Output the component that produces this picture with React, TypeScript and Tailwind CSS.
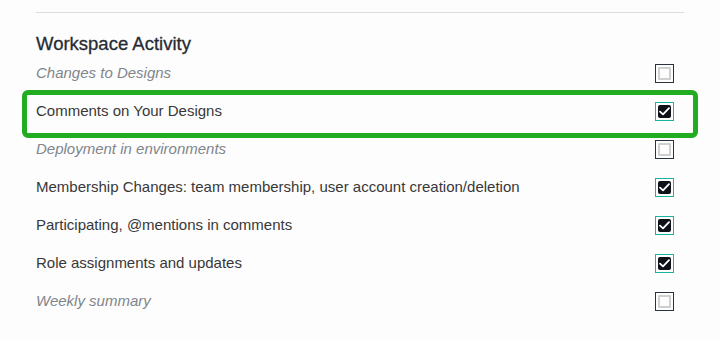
import React from 'react';

type Pref = { label: string; checked: boolean; highlight?: boolean };

const prefs: Pref[] = [
  { label: 'Changes to Designs', checked: false },
  { label: 'Comments on Your Designs', checked: true, highlight: true },
  { label: 'Deployment in environments', checked: false },
  { label: 'Membership Changes: team membership, user account creation/deletion', checked: true },
  { label: 'Participating, @mentions in comments', checked: true },
  { label: 'Role assignments and updates', checked: true },
  { label: 'Weekly summary', checked: false },
];

function Checkbox({ checked }: { checked: boolean }) {
  if (checked) {
    return (
      <div className="w-[19px] h-[19px] border border-[#19b3a3] p-[2px] shrink-0">
        <div className="w-full h-full bg-[#0e1218] rounded-[2px] flex items-center justify-center">
          <svg width="11" height="9" viewBox="0 0 11 9" fill="none">
            <path d="M1 4.6L4 7.4L10 1.2" stroke="#fff" strokeWidth="1.8" strokeLinecap="round" strokeLinejoin="round" />
          </svg>
        </div>
      </div>
    );
  }
  return (
    <div className="w-[19px] h-[19px] border border-[#2c323a] p-[2px] shrink-0">
      <div className="w-full h-full border-2 border-[#cfcfcf] rounded-[1px]" />
    </div>
  );
}

function PrefRow({ pref }: { pref: Pref }) {
  return (
    <div className="relative h-[38px] flex items-center justify-between pr-[10px]">
      <span
        className={
          pref.checked
            ? 'text-[15px] text-[#383838]'
            : 'text-[15px] italic text-[#80858b]'
        }>
        {pref.label}
      </span>
      <Checkbox checked={pref.checked} />
      {pref.highlight && (
        <div className="absolute left-[-14px] right-[-14px] top-[-2px] bottom-[-8px] border-[5px] border-[#22ac22] rounded-[6px] pointer-events-none" />
      )}
    </div>
  );
}

export default function App() {
  return (
    <div
      className="w-[720px] h-[339px] bg-[#fdfdfd] px-9 pt-3 overflow-hidden"
      style={{ fontFamily: '"Liberation Sans", Arial, sans-serif' }}>
      <div className="h-px bg-[#dddddd]" />
      <h2 className="mt-[21px] h-[20px] leading-[20px] text-[18.5px] text-[#262b33] [-webkit-text-stroke:0.3px_#262b33]">
        Workspace Activity
      </h2>
      <div className="flex flex-col">
        {prefs.map((p) => (
          <PrefRow key={p.label} pref={p} />
        ))}
      </div>
    </div>
  );
}
